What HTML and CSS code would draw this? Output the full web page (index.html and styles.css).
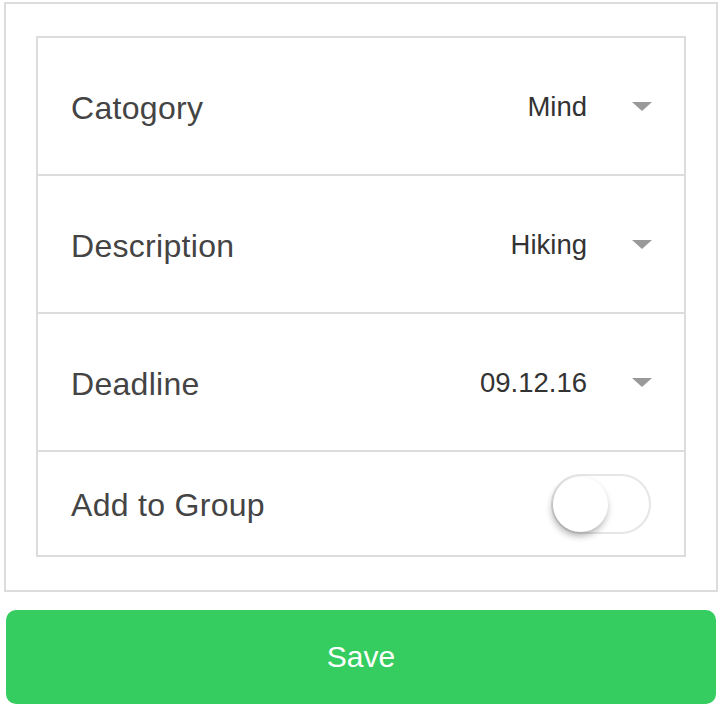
FILE: index.html
```html
<!DOCTYPE html>
<html>
<head>
<meta charset="utf-8">
<link rel="stylesheet" href="styles.css">
</head>
<body>
<div class="panel">
  <div class="list">
    <div class="row">
      <span class="label">Catogory</span>
      <span class="value">Mind</span>
      <span class="caret"></span>
    </div>
    <div class="row">
      <span class="label">Description</span>
      <span class="value">Hiking</span>
      <span class="caret"></span>
    </div>
    <div class="row">
      <span class="label">Deadline</span>
      <span class="value">09.12.16</span>
      <span class="caret"></span>
    </div>
    <div class="row row-toggle">
      <span class="label">Add to Group</span>
      <span class="toggle"><span class="knob"></span></span>
    </div>
  </div>
</div>
<button class="save">Save</button>
</body>
</html>
```
FILE: styles.css
```css
html, body {
  margin: 0;
  padding: 0;
  background: #fff;
}
body {
  font-family: "Liberation Sans", Arial, sans-serif;
  color: #444;
}
.panel {
  margin: 2px 4px 0 4px;
  border: 2px solid #dcdcdc;
  padding: 32px 30px 33px 30px;
}
.list {
  border: 2px solid #dcdcdc;
}
.row {
  height: 136px;
  display: flex;
  align-items: center;
  padding: 0 32px 0 33px;
  border-bottom: 2px solid #dcdcdc;
}
.row-toggle {
  height: 103px;
  border-bottom: none;
}
.label {
  flex: 1;
  font-size: 32px;
  letter-spacing: 0.3px;
  margin-top: 4px;
  color: #444;
}
.value {
  font-size: 27.5px;
  margin-top: 2px;
  color: #333;
}
.caret {
  width: 0;
  height: 0;
  margin-left: 45px;
  border-left: 10px solid transparent;
  border-right: 10px solid transparent;
  border-top: 9px solid #999;
}
.toggle {
  position: relative;
  box-sizing: border-box;
  width: 100px;
  height: 60px;
  border: 2px solid #e6e6e6;
  border-radius: 30px;
  margin-right: 1px;
  background: #fff;
}
.knob {
  position: absolute;
  left: 0;
  top: 1px;
  width: 55px;
  height: 55px;
  border-radius: 50%;
  background: #fff;
  box-shadow: -1px 4px 7px rgba(0, 0, 0, 0.3);
}
.save {
  display: block;
  box-sizing: border-box;
  width: 710px;
  height: 94px;
  margin: 18px 6px 0 6px;
  border: none;
  border-radius: 10px;
  background: #35cc60;
  color: #fff;
  font-family: "Liberation Sans", Arial, sans-serif;
  font-size: 30px;
  padding: 0;
}
```
